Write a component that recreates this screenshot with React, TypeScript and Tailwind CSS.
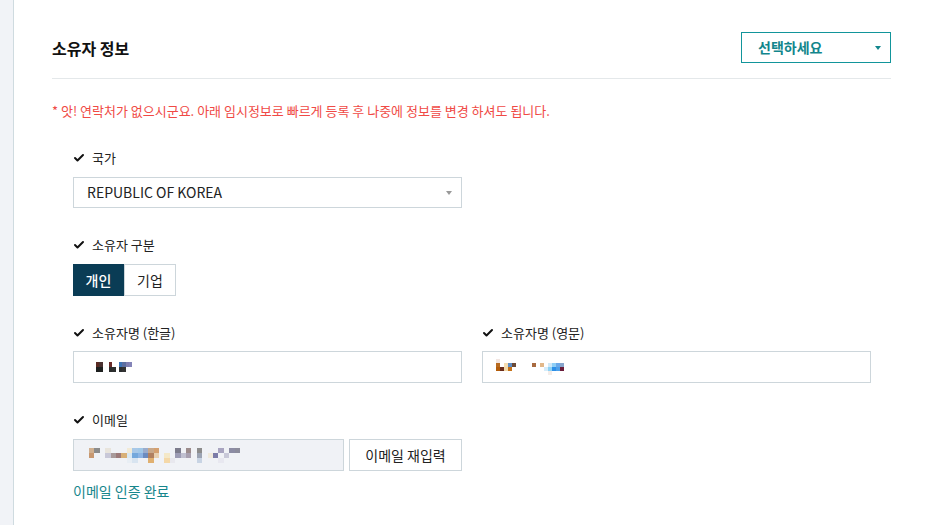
import { Check } from "lucide-react";

const font = { fontFamily: '"Noto Sans CJK KR", "Noto Sans", sans-serif' };

function Label({ children }: { children: React.ReactNode }) {
  return (
    <div className="flex items-center h-5 text-[13px] text-[#222]">
      <Check className="h-3 w-3 mr-[7px] text-[#111]" strokeWidth={4} />
      {children}
    </div>
  );
}

// pixelated (mosaic) blocks standing in for the masked values
function Mosaic({ cells, w, h }: { cells: string[][]; w: number; h: number }) {
  return (
    <div className="flex flex-col">
      {cells.map((row, i) => (
        <div key={i} className="flex">
          {row.map((c, j) => (
            <div key={j} style={{ background: c, width: w, height: h }} />
          ))}
        </div>
      ))}
    </div>
  );
}

const _ = "transparent";

const korName = [
  ["#5a2a22", "#4a3230", _, _, "#6a2a28", _, _, "#3d74b6", "#5d6fa0", "#7f7fb0", "#8484b8"],
  ["#1d1f1f", "#1f2120", _, _, "#2a2c2c", "#2d2f2f", _, "#2b2e2f", "#333", _, _],
];

const engName = [
  ["#f2e6e2", _, _, _, _, _, _, _, _, _, _, _, _, _, _, _, _, _],
  ["#b76a20", _, "#f6ddb0", "#5d8cc4", "#6b4a38", _, _, _, _, "#a86a40", _, "#e2b88a", _, "#cfe8f8", "#8ecff6", "#6aa8e8", "#87a5cc", _],
  ["#b35c0a", "#6a2c1a", "#f2d9a8", "#c57218", _, _, _, _, _, _, _, _, "#d6ecfa", "#8dd3f6", "#2c8fe8", "#4d9fe8", "#6a1c3a", _],
  [_, _, _, _, _, _, _, _, _, _, _, _, _, "#f4ece8", _, _, _, _],
];

const emailCells = [
  ["#d0b090", "#8b8b8b", _, "#e8e4dc", _, _, _, "#f2ead6", "#a8c8e8", "#a0c8e8", "#9aaccc", "#c8a88a", "#d4a070", _, _, _, "#7c7c8c", _, "#9c8c8c", _, "#8c8c8c", _, _, _, "#a8a4c0", _, "#8c8ca4", "#8c8c9c", _],
  ["#c89870", _, _, "#c8c8d8", "#a89a9a", "#9c7a7a", "#d8b078", "#d8e8f4", "#74a8dc", "#8cb4e4", "#6c8cc0", "#b08060", "#e8d0b0", _, "#f4e8c8", _, "#9c9cb4", "#c0c0d0", "#a8a0b0", _, "#9ca4b4", _, "#f0eadc", "#7c7ca8", _, "#c8c8d8", _, _, _],
  [_, _, _, _, _, _, _, "#e8eef4", "#d8e4f0", _, _, "#e0b070", _, _, "#f4d8a8", "#e8e8ee", _, _, _, _, "#c8d4e4", _, _, _, "#e8e8f0", _, _, _, _],
];

export default function App() {
  return (
    <div className="flex w-[925px] h-[525px] bg-white overflow-hidden" style={font}>
      <div className="w-[14px] shrink-0 bg-[#f1f3f7] border-r border-[#cfdbe0]" />
      <div className="flex-1 pl-[38px] pr-[34px] pt-[32px]">
        <div className="flex items-center justify-between pb-[15px] border-b border-[#e4e8ea]">
          <h2 className="text-[16px] font-bold text-[#111] leading-none">소유자 정보</h2>
          <button className="w-[150px] h-[31px] border border-[#12959b] flex items-center justify-between pl-[16px] pr-[9px] text-[14px] font-bold text-[#12868c]">
            선택하세요
            <span className="w-0 h-0 border-l-[3.5px] border-r-[3.5px] border-t-[4px] border-l-transparent border-r-transparent border-t-[#12868c]" />
          </button>
        </div>

        <p className="mt-[22px] text-[13px] text-[#f04a45] leading-5">
          * 앗! 연락처가 없으시군요. 아래 임시정보로 빠르게 등록 후 나중에 정보를 변경 하셔도 됩니다.
        </p>

        <div className="pl-[21px] mt-[27px] flex flex-col">
          <Label>국가</Label>
          <div className="mt-[9px] w-[389px] h-[31px] border border-[#cdd6db] flex items-center justify-between pl-[13px] pr-[9px] text-[14px] text-[#222]">
            REPUBLIC OF KOREA
            <span className="w-0 h-0 border-l-[3px] border-r-[3px] border-t-[4px] border-l-transparent border-r-transparent border-t-[#999]" />
          </div>

          <div className="mt-[27px]">
            <Label>소유자 구분</Label>
          </div>
          <div className="mt-[9px] flex">
            <button className="w-[51px] h-[32px] bg-[#0a3c55] text-white text-[14px] font-medium">개인</button>
            <button className="w-[52px] h-[32px] border border-[#cdd6db] text-[#222] text-[14px]">기업</button>
          </div>

          <div className="mt-[27px] flex gap-[20px]">
            <div className="w-[389px]">
              <Label>소유자명 (한글)</Label>
              <div className="mt-[8px] h-[32px] border border-[#cdd6db] flex items-center pl-[22px]">
                <Mosaic cells={korName} w={3.3} h={5} />
              </div>
            </div>
            <div className="w-[389px]">
              <Label>소유자명 (영문)</Label>
              <div className="mt-[8px] h-[32px] border border-[#cdd6db] flex items-center pl-[13px]">
                <Mosaic cells={engName} w={4} h={4} />
              </div>
            </div>
          </div>

          <div className="mt-[27px]">
            <Label>이메일</Label>
          </div>
          <div className="mt-[9px] flex gap-[5px]">
            <div className="w-[271px] h-[32px] bg-[#f0f2f6] border border-[#cdd6db] flex items-center pl-[15px]">
              <Mosaic cells={emailCells} w={5.4} h={5} />
            </div>
            <button className="w-[113px] h-[32px] border border-[#cdd6db] text-[14px] text-[#222]">이메일 재입력</button>
          </div>
          <div className="mt-[10px] text-[14px] text-[#17868c]">이메일 인증 완료</div>
        </div>
      </div>
    </div>
  );
}
